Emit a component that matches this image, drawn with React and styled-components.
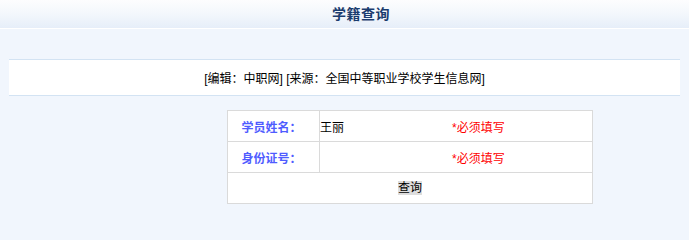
import { Fragment } from 'react';
import styled, { createGlobalStyle } from 'styled-components';

const GlobalStyle = createGlobalStyle`
  html, body {
    margin: 0;
    padding: 0;
    background: #f1f6fd;
    font-family: "Liberation Sans", "Noto Sans CJK SC", sans-serif;
    font-size: 12px;
    color: #000;
  }
`;

const Page = styled.div`
  height: 223px;
  overflow: hidden;
  background: #f1f6fd;
`;

const TitleBar = styled.div`
  height: 29px;
  box-sizing: border-box;
  border-bottom: 1px solid #ffffff;
  background: linear-gradient(to bottom, #fdfdfe 0%, #f3f7fc 50%, #e6eef9 100%);
  display: flex;
  align-items: center;
  justify-content: center;
  padding-left: 33px;
`;

const Title = styled.h1`
  margin: 0;
  font-size: 14px;
  line-height: 16px;
  font-weight: bold;
  color: #1b3c6e;
  letter-spacing: 0.5px;
`;

const InfoBox = styled.div`
  margin: 30px 9px 0 9px;
  height: 35px;
  background: #ffffff;
  border-top: 1px solid #d3e3f3;
  border-bottom: 1px solid #d3e3f3;
  display: flex;
  align-items: center;
  justify-content: center;
`;

const Form = styled.form`
  margin: 14px 0 0 227px;
  width: 366px;
  box-sizing: border-box;
  display: grid;
  grid-template-columns: 92px 1fr;
  grid-auto-rows: 31px;
  background: #ffffff;
  border-top: 1px solid #dadada;
  border-left: 1px solid #dadada;
`;

const Cell = styled.div`
  border-right: 1px solid #dadada;
  border-bottom: 1px solid #dadada;
  display: flex;
  align-items: center;
  justify-content: ${({ $center }) => ($center ? 'center' : 'flex-start')};
  grid-column: ${({ $wide }) => ($wide ? '1 / -1' : 'auto')};
  min-width: 0;
`;

const Label = styled(Cell)`
  justify-content: center;
  padding-right: 4px;
  color: #4f5cff;
  font-weight: bold;
`;

const Value = styled.input`
  width: 130px;
  border: none;
  outline: none;
  padding: 0;
  margin: 0;
  background: transparent;
  font-family: inherit;
  font-size: 12px;
  color: #000;
`;

const Required = styled.span`
  color: #ff0000;
  margin-left: 2px;
`;

const SubmitButton = styled.button`
  border: none;
  padding: 0;
  margin: 0;
  background: #dddddd;
  font-family: inherit;
  font-size: 12px;
  line-height: 14px;
  height: 14px;
  color: #000;
`;

const fields = [
  { label: '学员姓名：', value: '王丽' },
  { label: '身份证号：', value: '' },
];

export default function App() {
  return (
    <Page>
      <GlobalStyle />
      <TitleBar>
        <Title>学籍查询</Title>
      </TitleBar>
      <InfoBox>[编辑：中职网] [来源：全国中等职业学校学生信息网]</InfoBox>
      <Form onSubmit={(e) => e.preventDefault()}>
        {fields.map((f) => (
          <Fragment key={f.label}>
            <Label>{f.label}</Label>
            <Cell>
              <Value defaultValue={f.value} />
              <Required>*必须填写</Required>
            </Cell>
          </Fragment>
        ))}
        <Cell $wide $center>
          <SubmitButton type="submit">查询</SubmitButton>
        </Cell>
      </Form>
    </Page>
  );
}
